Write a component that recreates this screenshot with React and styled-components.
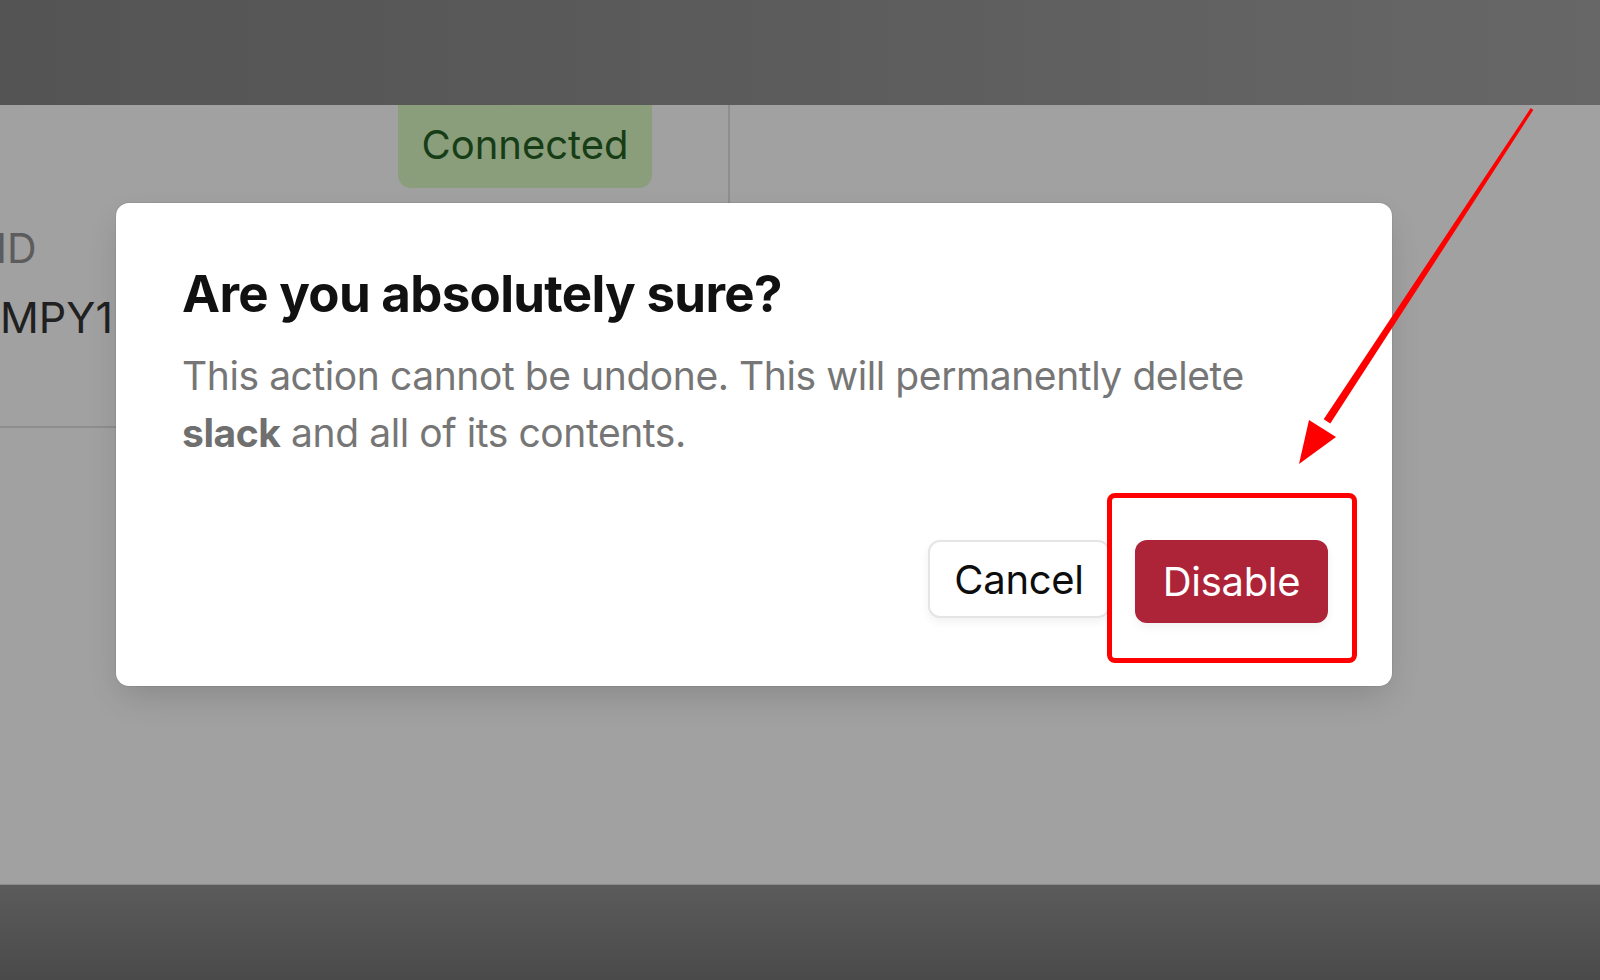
import React from 'react'
import styled, { createGlobalStyle } from 'styled-components'

const GlobalStyle = createGlobalStyle`
  html, body {
    margin: 0;
    padding: 0;
    background: #a1a1a1;
  }
  body {
    font-family: Inter, "Noto Sans", "Liberation Sans", sans-serif;
  }
  * {
    box-sizing: border-box;
  }
`

const Page = styled.div`
  position: relative;
  width: 1600px;
  height: 980px;
  overflow: hidden;
  display: flex;
  flex-direction: column;
`

const TopBand = styled.div`
  height: 105px;
  flex-shrink: 0;
  background: linear-gradient(90deg, #545454 0%, #5b5b5b 45%, #676767 100%);
`

const BottomBand = styled.div`
  height: 96px;
  flex-shrink: 0;
  background: linear-gradient(180deg, #5b5b5b 0%, #4a4a4a 100%);
  border-top: 1px solid #8a8a8a;
`

const Content = styled.div`
  position: relative;
  flex: 1;
  background: #a1a1a1;
`

const Card = styled.div`
  margin-left: -4px;
  width: 734px;
  height: 323px;
  border-right: 2px solid #8e8e8e;
  border-bottom: 2px solid #8e8e8e;
  display: flex;
  flex-direction: column;
`

const BadgeRow = styled.div`
  display: flex;
  padding-left: 402px;
`

const Badge = styled.div`
  width: 254px;
  height: 83px;
  border-radius: 0 0 13px 13px;
  background: #8a9e7b;
  color: #173d17;
  font-size: 40px;
  display: flex;
  align-items: center;
  justify-content: center;
  padding-bottom: 4px;
`

const Field = styled.div`
  display: flex;
  flex-direction: column;
  margin-top: 35px;
  gap: 18px;
`

const FieldLabel = styled.div`
  font-size: 41px;
  line-height: 50px;
  color: #5c5c5c;
`

const FieldValue = styled.div`
  font-size: 43px;
  line-height: 52px;
  color: #202020;
  padding-left: 4px;
  white-space: nowrap;
`

const Dialog = styled.div`
  position: absolute;
  top: 98px;
  left: 116px;
  width: 1276px;
  background: #ffffff;
  border-radius: 13px;
  padding: 60px 64px 63px 66px;
  box-shadow: 0 0 0 1px rgba(0, 0, 0, 0.05), 0 14px 34px -6px rgba(0, 0, 0, 0.16);
  display: flex;
  flex-direction: column;
`

const Title = styled.h2`
  margin: 0;
  font-size: 51px;
  line-height: 62px;
  font-weight: 700;
  color: #111111;
  letter-spacing: -0.7px;
`

const Description = styled.p`
  margin: 22px 0 0;
  font-size: 39px;
  line-height: 57px;
  color: #767676;
  letter-spacing: -0.42px;
  max-width: 1100px;
  strong {
    font-weight: 700;
    color: #6f6f6f;
  }
`

const Footer = styled.div`
  margin-top: 79px;
  display: flex;
  justify-content: flex-end;
  align-items: flex-start;
  gap: 25px;
`

const Button = styled.button`
  width: ${(p) => p.$w}px;
  height: ${(p) => p.$h}px;
  border-radius: 12px;
  font-family: inherit;
  font-size: 40px;
  font-weight: 400;
  letter-spacing: -0.3px;
  padding: 0;
  display: flex;
  align-items: center;
  justify-content: center;
  cursor: pointer;
  border: ${(p) => (p.$danger ? 'none' : '2px solid #e5e5e5')};
  background: ${(p) => (p.$danger ? '#ad2338' : '#ffffff')};
  color: ${(p) => (p.$danger ? '#ffffff' : '#0d0d0d')};
  box-shadow: 0 4px 10px rgba(0, 0, 0, 0.06);
`

const Highlight = styled.div`
  position: absolute;
  left: 1107px;
  top: 493px;
  width: 250px;
  height: 170px;
  border: 5px solid #ff0000;
  border-radius: 8px;
  pointer-events: none;
`

const ArrowLayer = styled.svg`
  position: absolute;
  left: 0;
  top: 0;
  pointer-events: none;
`

const Arrow = () => (
  <ArrowLayer width="1600" height="980" viewBox="0 0 1600 980">
    <polygon
      points="1533.3,109.9 1530.7,108.1 1323.7,419.2 1330.3,423.6"
      fill="#ff0000"
    />
    <polygon points="1299,464 1309,420 1336,437" fill="#ff0000" />
  </ArrowLayer>
)

const App = () => {
  return (
    <Page>
      <GlobalStyle />
      <TopBand />
      <Content>
        <Card>
          <BadgeRow>
            <Badge>Connected</Badge>
          </BadgeRow>
          <Field>
            <FieldLabel>ID</FieldLabel>
            <FieldValue>MPY1</FieldValue>
          </Field>
        </Card>

        <Dialog role="alertdialog">
          <Title>Are you absolutely sure?</Title>
          <Description>
            This action cannot be undone. This will permanently delete{' '}
            <strong>slack</strong> and all of its contents.
          </Description>
          <Footer>
            <Button $w={182} $h={78}>Cancel</Button>
            <Button $w={193} $h={83} $danger>
              Disable
            </Button>
          </Footer>
        </Dialog>
      </Content>
      <BottomBand />
      <Highlight />
      <Arrow />
    </Page>
  )
}

export default App
